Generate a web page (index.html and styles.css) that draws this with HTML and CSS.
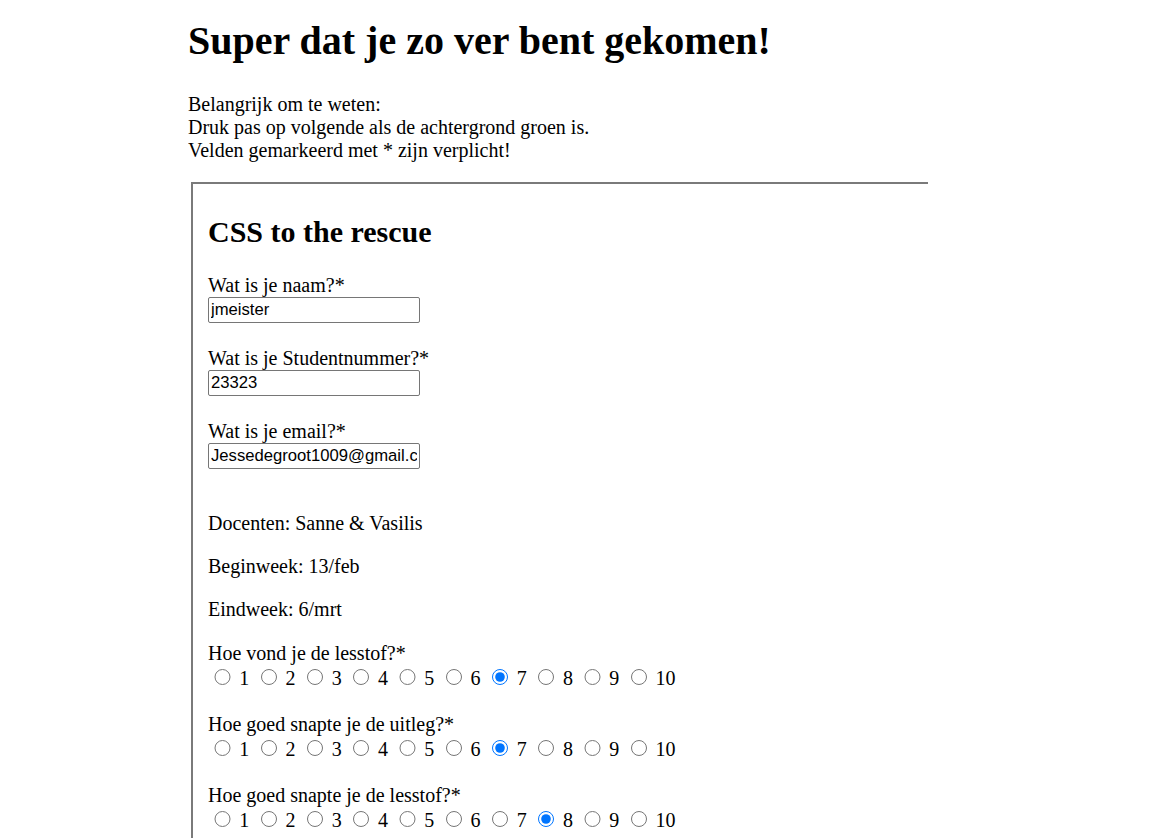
FILE: index.html
```html
<!DOCTYPE html>
<html lang="nl">
<head>
<meta charset="utf-8">
<title>Enquête</title>
<link rel="stylesheet" href="styles.css">
</head>
<body>
<main class="page">
  <h1 class="title">Super dat je zo ver bent gekomen!</h1>
  <p class="intro">Belangrijk om te weten:<br>Druk pas op volgende als de achtergrond groen is.<br>Velden gemarkeerd met * zijn verplicht!</p>
  <form class="form-window">
    <fieldset class="step">
      <h2 class="step-title">CSS to the rescue</h2>
      <div class="field">
        <label class="field-label" for="naam">Wat is je naam?*</label>
        <input class="text-input" type="text" id="naam" value="jmeister">
      </div>
      <div class="field">
        <label class="field-label" for="nummer">Wat is je Studentnummer?*</label>
        <input class="text-input" type="text" id="nummer" value="23323">
      </div>
      <div class="field field-last">
        <label class="field-label" for="email">Wat is je email?*</label>
        <input class="text-input" type="email" id="email" value="Jessedegroot1009@gmail.com">
      </div>
      <div class="info">
        <p class="info-line">Docenten: Sanne &amp; Vasilis</p>
        <p class="info-line">Beginweek: 13/feb</p>
        <p class="info-line">Eindweek: 6/mrt</p>
      </div>
      <div class="rating">
        <div class="field-label">Hoe vond je de lesstof?*</div>
        <div class="scale">
          <input type="radio" name="q1" id="q1-1"> <label for="q1-1">1</label>
          <input type="radio" name="q1" id="q1-2"> <label for="q1-2">2</label>
          <input type="radio" name="q1" id="q1-3"> <label for="q1-3">3</label>
          <input type="radio" name="q1" id="q1-4"> <label for="q1-4">4</label>
          <input type="radio" name="q1" id="q1-5"> <label for="q1-5">5</label>
          <input type="radio" name="q1" id="q1-6"> <label for="q1-6">6</label>
          <input type="radio" name="q1" id="q1-7" checked> <label for="q1-7">7</label>
          <input type="radio" name="q1" id="q1-8"> <label for="q1-8">8</label>
          <input type="radio" name="q1" id="q1-9"> <label for="q1-9">9</label>
          <input type="radio" name="q1" id="q1-10"> <label for="q1-10">10</label>
        </div>
      </div>
      <div class="rating">
        <div class="field-label">Hoe goed snapte je de uitleg?*</div>
        <div class="scale">
          <input type="radio" name="q2" id="q2-1"> <label for="q2-1">1</label>
          <input type="radio" name="q2" id="q2-2"> <label for="q2-2">2</label>
          <input type="radio" name="q2" id="q2-3"> <label for="q2-3">3</label>
          <input type="radio" name="q2" id="q2-4"> <label for="q2-4">4</label>
          <input type="radio" name="q2" id="q2-5"> <label for="q2-5">5</label>
          <input type="radio" name="q2" id="q2-6"> <label for="q2-6">6</label>
          <input type="radio" name="q2" id="q2-7" checked> <label for="q2-7">7</label>
          <input type="radio" name="q2" id="q2-8"> <label for="q2-8">8</label>
          <input type="radio" name="q2" id="q2-9"> <label for="q2-9">9</label>
          <input type="radio" name="q2" id="q2-10"> <label for="q2-10">10</label>
        </div>
      </div>
      <div class="rating">
        <div class="field-label">Hoe goed snapte je de lesstof?*</div>
        <div class="scale">
          <input type="radio" name="q3" id="q3-1"> <label for="q3-1">1</label>
          <input type="radio" name="q3" id="q3-2"> <label for="q3-2">2</label>
          <input type="radio" name="q3" id="q3-3"> <label for="q3-3">3</label>
          <input type="radio" name="q3" id="q3-4"> <label for="q3-4">4</label>
          <input type="radio" name="q3" id="q3-5"> <label for="q3-5">5</label>
          <input type="radio" name="q3" id="q3-6"> <label for="q3-6">6</label>
          <input type="radio" name="q3" id="q3-7"> <label for="q3-7">7</label>
          <input type="radio" name="q3" id="q3-8" checked> <label for="q3-8">8</label>
          <input type="radio" name="q3" id="q3-9"> <label for="q3-9">9</label>
          <input type="radio" name="q3" id="q3-10"> <label for="q3-10">10</label>
        </div>
      </div>
    </fieldset>
  </form>
</main>
</body>
</html>
```

FILE: styles.css
```css
html, body {
  margin: 0;
  padding: 0;
  background: #ffffff;
}

body {
  font-family: "Liberation Serif", "Times New Roman", serif;
  font-size: 20px;
  line-height: 23px;
  color: #000000;
}

.page {
  margin-left: 188px;
  width: 740px;
  overflow: hidden;
  padding-top: 1px;
}

.title {
  font-size: 40px;
  line-height: 46px;
  font-weight: bold;
  margin: 17px 0 29px;
}

.intro {
  margin: 0 0 20px;
}

.form-window {
  width: 740px;
  overflow: hidden;
}

.step {
  width: 1000px;
  margin: 0 0 0 3px;
  border: 2px solid #7a7a7a;
  border-right: none;
  border-bottom: none;
  padding: 7px 0 0 15px;
  min-width: 0;
}

.step-title {
  font-size: 30px;
  line-height: 34px;
  font-weight: bold;
  margin: 24px 0 25px;
}

.field {
  margin-bottom: 24px;
}

.field-last {
  margin-bottom: 0;
}

.field-label {
  display: block;
  height: 23px;
}

.text-input {
  display: block;
  box-sizing: border-box;
  width: 212px;
  height: 26px;
  margin: 0;
  padding: 1px 2px;
  border: 1px solid #767676;
  border-radius: 2px;
  font-family: "Liberation Sans", Arial, sans-serif;
  font-size: 16.67px;
  color: #000000;
  background: #ffffff;
}

.info {
  margin-top: 43px;
}

.info-line {
  margin: 0 0 20px;
}

.info-line:last-child {
  margin-bottom: 21px;
}

.rating {
  margin-bottom: 23px;
}

.scale {
  height: 25px;
  white-space: nowrap;
}

.scale input {
  width: 16.25px;
  height: 16.25px;
  margin: 3.75px 3.75px 0 6.25px;
  vertical-align: 0;
  accent-color: #0075ff;
}
```
